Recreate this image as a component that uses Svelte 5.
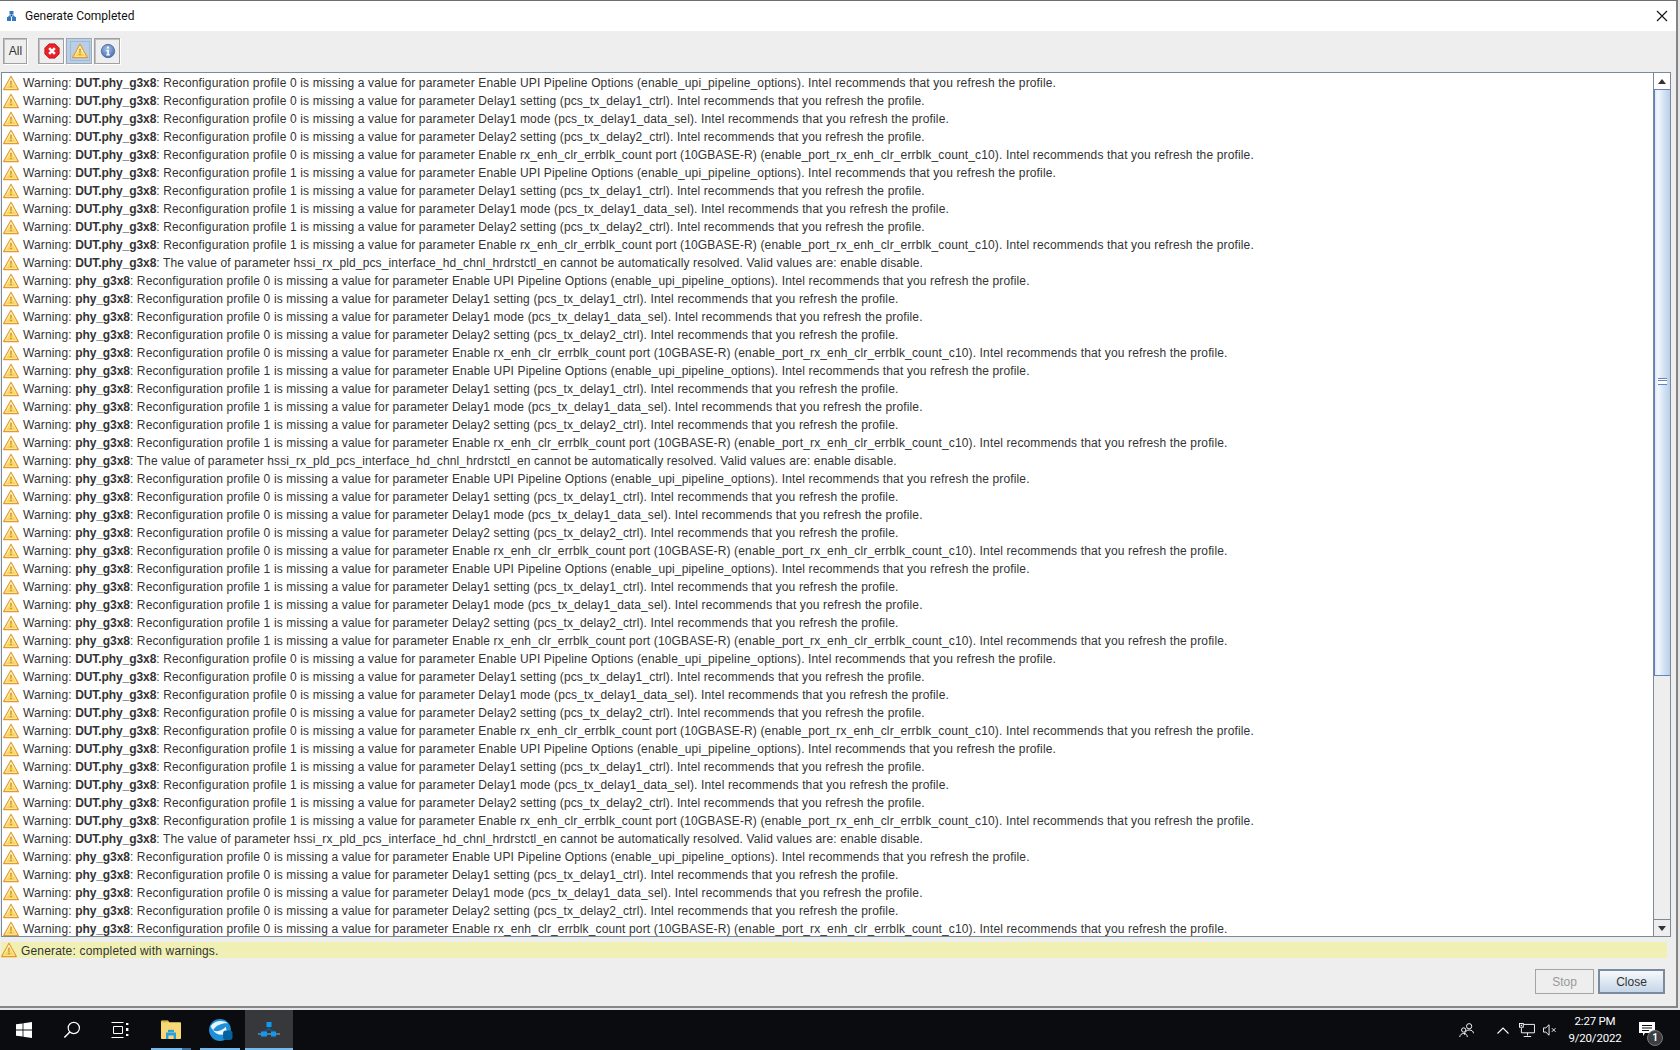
<script lang="ts">
  // message bodies shared by every profile line
  const params = [
    'Enable UPI Pipeline Options (enable_upi_pipeline_options)',
    'Delay1 setting (pcs_tx_delay1_ctrl)',
    'Delay1 mode (pcs_tx_delay1_data_sel)',
    'Delay2 setting (pcs_tx_delay2_ctrl)',
    'Enable rx_enh_clr_errblk_count port (10GBASE-R) (enable_port_rx_enh_clr_errblk_count_c10)'
  ]

  type Row = { source: string; text: string }

  function profileRows(source: string, profiles: number[]): Row[] {
    const out: Row[] = []
    for (const p of profiles) {
      for (const param of params) {
        out.push({
          source,
          text: `Reconfiguration profile ${p} is missing a value for parameter ${param}. Intel recommends that you refresh the profile.`
        })
      }
    }
    return out
  }

  function valueRow(source: string): Row {
    return {
      source,
      text: 'The value of parameter hssi_rx_pld_pcs_interface_hd_chnl_hrdrstctl_en cannot be automatically resolved. Valid values are: enable disable.'
    }
  }

  const rows: Row[] = [
    ...profileRows('DUT.phy_g3x8', [0, 1]),
    valueRow('DUT.phy_g3x8'),
    ...profileRows('phy_g3x8', [0, 1]),
    valueRow('phy_g3x8'),
    ...profileRows('phy_g3x8', [0, 1]),
    ...profileRows('DUT.phy_g3x8', [0, 1]),
    valueRow('DUT.phy_g3x8'),
    ...profileRows('phy_g3x8', [0])
  ]
</script>

<svg class="defs" width="0" height="0" aria-hidden="true">
  <defs>
    <linearGradient id="warnFill" x1="0" y1="0" x2="0" y2="1">
      <stop offset="0" stop-color="#fff6c8" />
      <stop offset="0.6" stop-color="#fcdc70" />
      <stop offset="1" stop-color="#f8c54a" />
    </linearGradient>
    <symbol id="warn" viewBox="0 0 16 16">
      <path d="M8 1.2 15.4 14.6H.6Z" fill="url(#warnFill)" stroke="#e29a2e" stroke-width="1.1" stroke-linejoin="round" />
      <path d="M8 3.4 13.4 13.4H2.6Z" fill="none" stroke="#fff3c4" stroke-width=".7" />
      <path d="M7.3 5.8h1.4L8.400 10H7.600Z" fill="#b8862e" />
      <rect x="7.300" y="10.800" width="1.400" height="1.400" fill="#b8862e" />
    </symbol>
    <radialGradient id="infoFill" cx="0.45" cy="0.35" r="0.7">
      <stop offset="0" stop-color="#a9c6ea" />
      <stop offset="1" stop-color="#4168a8" />
    </radialGradient>
  </defs>
</svg>

<div class="screen">
  <div class="window">
    <header class="titlebar">
      <svg class="app-icon" width="16" height="16" viewBox="0 0 16 16">
        <rect x="4.500" y="3" width="4" height="3.500" fill="#2f78c4" />
        <rect x="2" y="9" width="4" height="4" fill="#2f78c4" />
        <rect x="7" y="9" width="4" height="4" fill="#2f78c4" />
        <path d="M6.500 6.500v1.500M4 9V8h5v1" stroke="#1b4f8a" fill="none" />
      </svg>
      <span class="title">Generate Completed</span>
      <svg class="close-x" width="12" height="12" viewBox="0 0 12 12">
        <path d="M1 1 11 11M11 1 1 11" stroke="#111" stroke-width="1.1" fill="none" />
      </svg>
    </header>

    <div class="panel">
      <div class="toolbar">
        <button class="tool all">All</button>
        <div class="tool-group">
          <button class="tool icon">
            <svg width="16" height="16" viewBox="0 0 18 18">
              <path d="M5.600 1h6.800L17 5.600v6.800L12.400 17H5.600L1 12.400V5.600Z" fill="#ec2027" stroke="#b9131a" />
              <path d="M5.800 5.800 12.200 12.200M12.200 5.800 5.800 12.200" stroke="#fff" stroke-width="2.800" />
            </svg>
          </button>
          <button class="tool icon selected">
            <span class="sel-inner">
              <svg width="16" height="16"><use href="#warn" /></svg>
            </span>
          </button>
          <button class="tool icon">
            <svg width="16" height="16" viewBox="0 0 18 18">
              <circle cx="9" cy="9" r="7.500" fill="url(#infoFill)" stroke="#4a6fa8" />
              <circle cx="9" cy="5.200" r="1.200" fill="#fff" />
              <path d="M7 8h3v4.600h1.200V14H7v-1.400h1.200V9.400H7Z" fill="#fff" />
            </svg>
          </button>
        </div>
      </div>

      <div class="log">
        <div class="log-rows">
          {#each rows as row}
            <div class="row">
              <svg class="row-icon" width="16" height="16"><use href="#warn" /></svg>
              <span class="msg">Warning: <b>{row.source}</b>: {row.text}</span>
            </div>
          {/each}
        </div>
        <div class="scrollbar">
          <div class="arrow-btn top"><i class="tri up"></i></div>
          <div class="thumb">
            <div class="grip"></div>
          </div>
          <div class="track"></div>
          <div class="arrow-btn bottom"><i class="tri down"></i></div>
        </div>
      </div>

      <div class="status">
        <svg width="16" height="16"><use href="#warn" /></svg>
        <span>Generate: completed with warnings.</span>
      </div>

      <div class="actions">
        <button class="btn stop" disabled>Stop</button>
        <button class="btn close">Close</button>
      </div>
    </div>
  </div>

  <footer class="taskbar">
    <div class="task-left">
      <div class="task-btn">
        <svg width="16" height="16" viewBox="0 0 16 16">
          <path d="M0 2.300 6.600 1.400V7.600H0ZM7.400 1.300 16 0V7.600H7.400ZM0 8.400H6.600V14.600L0 13.700ZM7.400 8.400H16V16L7.400 14.700Z" fill="#fff" />
        </svg>
      </div>
      <div class="task-btn">
        <svg width="18" height="18" viewBox="0 0 18 18">
          <circle cx="10.800" cy="7" r="5.600" fill="none" stroke="#fff" stroke-width="1.200" />
          <path d="M6.800 11 1.400 16.600" stroke="#fff" stroke-width="1.500" />
        </svg>
      </div>
      <div class="task-btn">
        <svg width="18" height="16" viewBox="0 0 18 16">
          <path d="M.5 .5h12M.5 15.500h12M2.500 4.500h9v7h-9Z" fill="none" stroke="#fff" />
          <path d="M15 1h2.400v2H15ZM15 6h2.400v3H15ZM15 12h2.400v2H15Z" fill="#fff" />
        </svg>
      </div>
      <div class="task-btn app running stacked first-app">
        <svg width="22" height="20" viewBox="0 0 22 20">
          <path d="M1 1.500C1 1 1.400 .6 2 .6h6l1.200 1.600H20c.6 0 1 .4 1 1V18c0 .6-.4 1-1 1H2c-.6 0-1-.4-1-1Z" fill="#f8d775" />
          <path d="M1.600 1.600h6" stroke="#e0b13c" stroke-width="1.400" />
          <path d="M6 12.500h10v6.500h-2.400v-3.600H8.400V19H6Z" fill="#2b9fe0" />
          <rect x="8" y="9.800" width="6" height="2.400" fill="#2b9fe0" />
        </svg>
      </div>
      <div class="task-btn app running">
        <svg width="25" height="25" viewBox="0 0 24 24">
          <circle cx="11.500" cy="11.500" r="10.500" fill="#1f8fd8" />
          <path d="M2.500 8C6 2.500 14 1.500 19 5 14 4.500 8 6.500 5 11.500 3.800 10.700 3 9.400 2.500 8Z" fill="#e6f5fd" />
          <path d="M4.500 11.500C9 14 14 12 17 8.500L18.500 14C14 17.500 8 16.500 4.500 11.500Z" fill="#f1f9fe" />
          <rect x="14.500" y="12" width="9" height="9" rx="2.500" fill="#05629f" />
        </svg>
      </div>
      <div class="task-btn app active">
        <svg width="22" height="18" viewBox="0 0 22 18">
          <rect x="8.500" y="1" width="5" height="5" fill="#0f9af0" />
          <path d="M11 6v3M5 11 11 8l6 3" stroke="#0c5fa8" fill="none" />
          <rect x="3" y="10.500" width="6" height="5" fill="#0f9af0" />
          <rect x="13" y="10.500" width="5" height="5" fill="#0f9af0" />
          <path d="M0 13h3M9 13h4M18 13h4" stroke="#7fb8dc" />
        </svg>
      </div>
    </div>

    <div class="tray">
      <svg class="people" width="15" height="16" viewBox="0 0 16 16">
        <circle cx="10.800" cy="4" r="2.800" fill="none" stroke="#fff" />
        <path d="M5.800 13c.2-3 2-5 5-5s4.500 1.500 4.700 3.500" fill="none" stroke="#fff" />
        <circle cx="5" cy="8" r="2.300" fill="#0a0c10" stroke="#fff" />
        <path d="M.8 15.500c.2-2.500 2-3.800 4.200-3.800s3.700 1.300 3.900 3.800" fill="none" stroke="#fff" />
      </svg>
      <svg class="chev" width="12" height="7" viewBox="0 0 12 7">
        <path d="M.5 6.500 6 1l5.500 5.500" fill="none" stroke="#fff" stroke-width="1.100" />
      </svg>
      <svg class="net" width="16" height="14" viewBox="0 0 17 15">
        <path d="M4.500 1.500H16.500V10.500H2.500V5.500M9 10.500V13.500M5 14.500H13" fill="none" stroke="#fff" />
        <rect x=".5" y=".5" width="4" height="4" fill="#0a0c10" stroke="#fff" />
        <rect x="1.800" y="1.800" width="1.400" height="1.400" fill="#fff" />
      </svg>
      <svg class="vol" width="14" height="12" viewBox="0 0 15 13">
        <path d="M.5 4.200H3L6.500 .8V12.200L3 8.800H.5Z" fill="none" stroke="#fff" />
        <path d="M9.500 4.500 13.500 8.500M13.500 4.500 9.500 8.500" stroke="#fff" />
      </svg>
      <div class="clock">
        <span>2:27 PM</span>
        <span>9/20/2022</span>
      </div>
      <div class="notify">
        <svg width="16" height="15" viewBox="0 0 16 15">
          <path d="M0 0H16V11H6L4 14V11H0Z" fill="#fff" />
          <path d="M3 3.500H13M3 6H13M3 8.500H10" stroke="#0a0c10" />
        </svg>
        <span class="badge">1</span>
      </div>
    </div>
  </footer>
</div>

<style>
  :global(body) {
    margin: 0;
    overflow: hidden;
  }

  .defs {
    position: absolute;
  }

  .screen {
    width: 1680px;
    height: 1050px;
    display: flex;
    flex-direction: column;
    background: #e4e4e4;
    font-family: 'Liberation Sans', Arial, sans-serif;
  }

  .window {
    width: 1678px;
    height: 1008px;
    box-sizing: border-box;
    border-top: 1px solid #6f6f6f;
    border-right: 2px solid #858585;
    border-bottom: 2px solid #858585;
    display: flex;
    flex-direction: column;
    flex: none;
  }

  .titlebar {
    height: 30px;
    flex: none;
    background: #fff;
    display: flex;
    align-items: center;
    padding: 0 8px 0 5px;
  }

  .app-icon {
    margin-right: 4px;
  }

  .title {
    font-family: Roboto, 'Noto Sans', sans-serif;
    font-size: 12px;
    color: #111;
    flex: 1;
  }

  .panel {
    flex: 1;
    background: #eeeeee;
    display: flex;
    flex-direction: column;
    min-height: 0;
  }

  .toolbar {
    height: 41px;
    flex: none;
    box-sizing: border-box;
    padding: 7px 0 0 3px;
    display: flex;
    gap: 11px;
  }

  .tool-group {
    display: flex;
    gap: 2px;
  }

  .tool {
    width: 26px;
    height: 26px;
    box-sizing: border-box;
    border: 1px solid #a0a0a0;
    box-shadow: 1px 1px 0 #fff, inset 1px 1px 0 #c0c0c0;
    background: #eeeeee;
    padding: 0 0 0 2px;
    display: flex;
    align-items: center;
    justify-content: center;
    font-family: inherit;
    font-size: 12px;
    color: #333;
  }

  .tool.all {
    width: 24px;
    padding-left: 1px;
  }

  .tool.selected {
    background: #b8cfe5;
    border-color: #9aa8b8;
    box-shadow: 1px 1px 0 #fff;
  }

  .sel-inner {
    width: 18px;
    height: 18px;
    display: flex;
    align-items: center;
    justify-content: center;
    border: 1px solid #a3b9cf;
  }

  .log {
    height: 865px;
    flex: none;
    margin: 0 5px 0 1px;
    box-sizing: border-box;
    border: 1px solid #7a8a99;
    background: #fff;
    display: flex;
    overflow: hidden;
  }

  .log-rows {
    flex: 1;
    min-width: 0;
    overflow: hidden;
    padding-top: 1px;
  }

  .row {
    height: 18px;
    display: flex;
    align-items: center;
    gap: 4px;
    padding-left: 1px;
    font-size: 12px;
    color: #333;
    white-space: nowrap;
  }

  .row-icon {
    flex: none;
  }

  .msg {
    letter-spacing: 0.14px;
  }

  .msg b {
    font-weight: 700;
    letter-spacing: -0.08px;
  }

  .scrollbar {
    width: 16px;
    flex: none;
    display: flex;
    flex-direction: column;
    background: #eeeeee;
    border-left: 1px solid #7a8a99;
  }

  .arrow-btn {
    height: 16px;
    flex: none;
    display: flex;
    align-items: center;
    justify-content: center;
    background: #eeeeee;
  }

  .arrow-btn.top {
    border-bottom: 1px solid #6382bf;
    background: #fff;
  }

  .arrow-btn.bottom {
    border-top: 1px solid #7a8a99;
  }

  .tri {
    width: 0;
    height: 0;
    border-left: 4px solid transparent;
    border-right: 4px solid transparent;
  }

  .tri.up {
    border-bottom: 5px solid #333;
  }

  .tri.down {
    border-top: 5px solid #333;
  }

  .thumb {
    height: 586px;
    flex: none;
    box-sizing: border-box;
    border-bottom: 1px solid #6382bf;
    border-left: 1px solid #6382bf;
    background: linear-gradient(90deg, #dde8f6 0%, #f4f8fc 20%, #d3e2f3 60%, #b8cfe8 100%);
    display: flex;
    align-items: center;
    justify-content: center;
  }

  .grip {
    width: 9px;
    height: 5px;
    margin-top: -2px;
    border-top: 1px solid #6382bf;
    border-bottom: 1px solid #6382bf;
    background: linear-gradient(#fff 0 1px, #6382bf 1px 2px, #fff 2px);
  }

  .track {
    flex: 1;
  }

  .status {
    margin: 5px 9px 0 1px;
    height: 16px;
    flex: none;
    background: #f0f0b4;
    display: flex;
    align-items: center;
    gap: 4px;
    font-size: 12px;
    letter-spacing: 0.18px;
    color: #333;
  }

  .status span {
    padding-top: 1px;
  }

  .actions {
    display: flex;
    justify-content: flex-end;
    gap: 4px;
    padding: 11px 11px 0 0;
  }

  .btn {
    height: 25px;
    box-sizing: border-box;
    font-family: inherit;
    font-size: 12px;
    padding: 0;
  }

  .btn.stop {
    width: 59px;
    border: 1px solid #a4a4a4;
    background: #eeeeee;
    color: #999;
  }

  .btn.close {
    width: 67px;
    border: 2px solid #7a8a9f;
    background: linear-gradient(#f6f9fc, #c5d6e8);
    color: #333;
  }

  .taskbar {
    margin-top: 2px;
    height: 40px;
    flex: none;
    background: #0a0c10;
    display: flex;
    justify-content: space-between;
    color: #fff;
  }

  .task-left {
    display: flex;
    gap: 1px;
  }

  .task-left .task-btn:not(.app) {
    margin-right: -1px;
  }

  .task-btn {
    position: relative;
    width: 48px;
    height: 40px;
    box-sizing: border-box;
    display: flex;
    align-items: center;
    justify-content: center;
  }

  .task-btn.first-app {
    margin-left: 3px;
  }

  .task-btn.running::after,
  .task-btn.active::after {
    content: '';
    position: absolute;
    left: 4px;
    right: 4px;
    bottom: 0;
    height: 2px;
    background: #76b9ed;
  }

  .task-btn.stacked::after {
    background: linear-gradient(90deg, #76b9ed 0 31px, #3f6f95 31px);
  }

  .task-btn.active {
    background: #36383c;
  }

  .task-btn.active::after {
    left: 0;
    right: 0;
  }

  .tray {
    display: flex;
    align-items: center;
    padding-right: 17px;
  }

  .people {
    margin-right: 23px;
  }

  .chev {
    margin-right: 10px;
  }

  .net {
    margin-right: 8px;
  }

  .vol {
    margin-right: 10px;
  }

  .clock {
    width: 56px;
    display: flex;
    flex-direction: column;
    align-items: center;
    font-family: Roboto, 'Noto Sans', sans-serif;
    font-size: 11.5px;
    letter-spacing: -0.2px;
    line-height: 17px;
    margin-right: 16px;
  }

  .notify {
    position: relative;
    width: 24px;
    height: 24px;
    box-sizing: border-box;
    padding-top: 4px;
  }

  .notify svg {
    display: block;
  }

  .badge {
    position: absolute;
    right: 0;
    top: 12px;
    width: 16px;
    height: 16px;
    box-sizing: border-box;
    border-radius: 50%;
    background: #3c3e42;
    border: 1px solid #777;
    font-family: Roboto, sans-serif;
    font-size: 10px;
    font-weight: 700;
    text-align: center;
    line-height: 14px;
  }
</style>
